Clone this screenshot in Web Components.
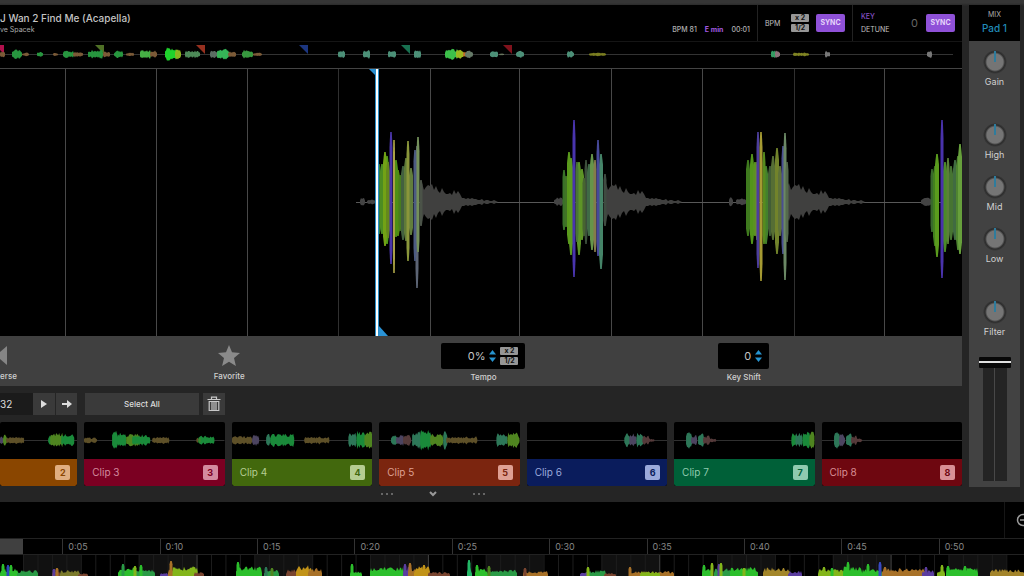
<!DOCTYPE html>
<html lang="en">
<head>
<meta charset="utf-8">
<title>Sampler deck</title>
<style>
  html, body { margin: 0; background: #252525; }
  body { font-family: Inter, "Liberation Sans", sans-serif; color: #c4c4c4; overflow-x: hidden; }
</style>
</head>
<body>
<sampler-app></sampler-app>
<script>
const define = (name, html, setup) => customElements.define(name, class extends HTMLElement {
  constructor() {
    super();
    this.attachShadow({ mode: 'open' });
  }
  connectedCallback() {
    if (this.shadowRoot.childNodes.length) return;
    const t = document.createElement('template');
    t.innerHTML = `<style>*{box-sizing:border-box}button,input{font:inherit;color:inherit;margin:0;padding:0;border:0;background:none}svg{display:block}</style>` +
      (typeof html === 'function' ? html(this) : html);
    this.shadowRoot.append(t.content.cloneNode(true));
    if (setup) setup(this, this.shadowRoot);
  }
});

/* ---------- waveform drawing ---------- */
const noise = n => { const s = Math.sin(n * 127.1) * 43758.5453; return s - Math.floor(s); };

// One spindle: x, height above and below the centre line, colour, width.
const spindle = (x, cy, up, down, color, w = 3) => {
  const h = w / 2, t = 0.8;
  return `<path fill="${color}" d="M${x - h} ${cy}L${x - h} ${cy - up * .78}L${x - t} ${cy - up}h${t * 2}L${x + h} ${cy - up * .78}L${x + h} ${cy + down * .78}L${x + t} ${cy + down}h${-t * 2}L${x - h} ${cy + down * .78}z"/>`;
};

// Runs of noise bars: [from, to, amplitude, colour]
const runs = (list, cy, both = true) => list.map(([a, b, amp, color]) => {
  const top = [], bottom = [];
  for (let x = a; x <= b; x += 1) {
    const edge = x === a || x >= b ? .5 : 1;
    const v = amp * edge * (.5 + .5 * noise(x * 1.7 + amp));
    top.push(`${x} ${(cy - v).toFixed(2)}`);
    bottom.unshift(`${x} ${(both ? cy + v * (.75 + .25 * noise(x)) : cy).toFixed(2)}`);
  }
  return `<path fill="${color}" d="M${top.join('L')}L${bottom.join('L')}z"/>`;
}).join('');

// Bursts of the main view: [x, up, down, colour, width]
const A = [
  [379,38,32,'#2f8040',4],[382,38,32,'#4c8c22',4],[387,46,42,'#4f9a17',4],[385,50,44,'#72a216',4],[388,40,36,'#64881c',4],
  [398,32,34,'#53890f',4],[396,42,35,'#4d8f14',4],[400,27,29,'#477c1e',3],
  [391,70,62,'#4a35a8',3],[394,62,71,'#aaa246',2],[403,36,38,'#43603f',4],[406,44,39,'#5f7a38',4],
  [411,34,33,'#627e3c',4],[408,61,59,'#8a963b',3],[417,56,86,'#5c6474',3],[415,52,59,'#4c5b82',3],[418,65,50,'#74905b',3],[421,22,24,'#4b5348',3]
];
const B = [
  [564,32,28,'#397228',3],[566,26,25,'#417326',3],[569,50,42,'#5a9a1c',4],[571,44,53,'#5c9b1f',4],[579,40,53,'#5b9526',4],
  [582,33,38,'#5e9426',4],[574,82,75,'#4934ae',3],[577,40,40,'#4a7636',3],[586,42,42,'#3c4f3b',3],[584,24,34,'#476530',3],
  [589,38,34,'#3f6a46',4],[592,48,48,'#65954a',4],[595,42,50,'#847c4a',3],[601,48,67,'#458468',4],[598,62,54,'#46499a',3],[605,28,24,'#3f4b41',3]
];
const C = [
  [748,42,34,'#3f7a1e',4],[752,48,42,'#53951a',4],[755,40,34,'#5b9320',4],[766,36,42,'#42802c',4],[764,50,42,'#568b1e',3],
  [757,40,38,'#718a36',3],[758,70,66,'#4c3e9c',3],[761,70,79,'#a59a32',3],[770,36,34,'#415d36',4],[773,46,38,'#566e34',4],[777,54,52,'#72832b',4],
  [780,36,34,'#5e7238',4],[783,56,52,'#4a4f91',3],[785,69,78,'#6b8865',3],[787,40,40,'#556a4e',3]
];
const D = [
  [932,33,30,'#39692c',3],[935,36,44,'#42801e',4],[937,48,55,'#5a9b1d',4],[945,40,50,'#4b8a28',4],[948,44,42,'#5b8138',3],
  [951,36,38,'#467432',4],[942,82,76,'#4932ab',3],[955,42,38,'#406b41',4],[958,46,48,'#4f8530',4],[960,58,52,'#67a03c',4]
];
const tail = [15,19,12,15,17,16,18,12,16,11,9,14,10,8,8,9,7,12,8,11,8,4,4,3,4,3,4,3,3,2,2,3,1,2,2,1,1,2,1,0];
const tailPath = (x0, cy) => {
  const up = tail.map((v, i) => `${x0 + i * 2} ${cy - v}`);
  const dn = tail.map((v, i) => `${x0 + i * 2} ${cy + v}`).reverse();
  return `<path fill="#40403f" d="M${up.join('L')}L${dn.join('L')}z"/>`;
};

define('wave-view', `
<style>
  :host{display:block;background:#000;border-top:1px solid #444}
  svg{width:100%;height:267px}
</style><svg viewBox="0 0 962 267" preserveAspectRatio="none" role="img" aria-label="Waveform"></svg>`,
(el, root) => {
  const cy = 133, svg = root.querySelector('svg');
  let s = '';
  [65,156,247,338,430,519,611,702,794,884].forEach((x, i) => {
    s += `<rect x="${x}" y="0" width="1" height="267" fill="${[3, 8].includes(i) ? '#303030' : '#484848'}"/>`;
  });
  s += `<rect x="356" y="${cy}" width="606" height="1" fill="#585858"/>`;
  s += runs([[360,365,5,'#444'],[367,376,3,'#444'],[554,563,5,'#444'],[729,733,6,'#444'],[736,746,4,'#444'],[921,931,5,'#444']], cy);
  [420,604,787].forEach(x => s += tailPath(x, cy));
  [A,B,C,D].forEach(g => g.forEach(([x,u,d,c,w]) => s += spindle(x, cy, u, d, c, w)));
  s += `<path fill="#2a8fd0" d="M369 0h8v8z"/><path fill="#2a93d6" d="M379 257l9 10h-9z"/>
    <rect x="375" width="4" height="267" fill="#2b8cc4"/><rect x="376" width="2" height="267" fill="#fff"/>`;
  svg.innerHTML = s;
});

define('wave-overview', `
<style>
  :host{display:block;background:#000;border-top:1px solid #151515}
  svg{width:100%;height:26px}
</style><svg viewBox="0 0 962 26" preserveAspectRatio="none" role="img" aria-label="Track overview"></svg>`,
(el, root) => {
  const g = '#27963f', b = '#7b5a37', t = '#4c9078';
  let s = '<rect x="0" y="12" width="953" height="1" fill="#333"/>';
  [[0,'#b0104c'],[95,'#4f7026'],[196,'#96301f'],[299,'#1c3680'],[401,'#187050'],[503,'#80121c']].forEach(([x, c]) =>
    s += x ? `<path fill="${c}" d="M${x} 3h9v9z"/>` : `<path fill="${c}" d="M0 3h4v9l-4-4z"/>`);
  s += runs([[0,5,3,b],[12,22,5,g],[22,29,2,b],[37,43,3,g],[53,58,2,b],[63,74,4,g],[73,83,3,b],[88,103,5,g],[103,110,3,b],[114,123,4,g],[126,134,2,b],
    [140,151,5,'#46b045'],[150,157,4,b],[165,177,7,'#1fd32c'],[175,181,5,'#8bb51f'],[185,200,4,'#4d8a58'],[210,219,4,'#5b6d62'],[217,229,6,'#35b557'],[228,236,3,b],
    [242,253,5,'#37993f'],[253,262,2,b],[338,345,4,t],[363,370,5,t],[388,396,4,t],[414,421,5,t],[445,458,6,'#3cc04a'],[456,464,5,'#9bb71f'],[463,467,3,'#c07028'],[465,473,4,'#667a68'],
    [490,498,4,t],[499,504,1,'#68765f'],[516,524,4,t],[567,574,4,t],[589,606,2,'#7a7d20'],[771,776,5,'#359a62'],[775,780,4,'#8d7079'],[793,809,2,'#808423'],[825,830,4,'#777'],[927,932,4,'#777']], 12.5);
  root.querySelector('svg').innerHTML = s;
});

/* ---------- small controls ---------- */
define('half-double', `
<style>
  :host{display:grid;gap:2px;width:18px}
  button{height:8px;background:#969696;color:#111;font-size:7px;line-height:8px;font-weight:700;border-radius:1px;display:block}
</style><button>x 2</button><button>1/2</button>`);

define('sync-button', `
<style>
  :host{display:block}
  button{display:block;width:29px;height:18px;border-radius:2px;background:#8f51d8;color:#e6d6fa;font-size:7px;font-weight:700;line-height:18px}
</style><button>SYNC</button>`);

define('step-arrows', `
<style>:host{display:block}button{display:block;width:7px;height:7px}svg{width:7px;height:7px}</style>
<button aria-label="Increase"><svg viewBox="0 0 7 7"><path d="M0 5.500L3.500 1L7 5.500z" fill="#2794d0"/></svg></button>
<button aria-label="Decrease"><svg viewBox="0 0 7 7"><path d="M0 1.500L3.500 6L7 1.500z" fill="#2794d0"/></svg></button>`);

define('deck-header', `
<style>
  :host{display:flex;height:36px;background:#000;align-items:stretch}
  .title{flex:1;min-width:0;padding-top:6px;white-space:nowrap}
  h1{margin:0;font-size:10px;line-height:14px;font-weight:500;color:#c4c4c4}
  p{margin:0;font-size:7px;line-height:10px;color:#aaa}
  .info{display:flex;gap:8px;font-size:7px;font-weight:500;line-height:10px;align-items:flex-end;padding:0 7px 6px 0;color:#b0b0b0;white-space:nowrap}
  .info b{color:#a35ce0}
  .box{display:flex;align-items:center;border-left:1px solid #222;padding:0 7px;font-size:7px;line-height:13px}
  .bpm{width:95px}
  .bpm span{flex:1}
  half-double{margin-right:7px}
  .key{width:110px;padding-left:8px}
  .key div{flex:1}
  .key .k{color:#8650c4;font-weight:500}
  .key div span{display:block}
  output{font-size:11px;color:#666;margin-right:8px}
</style>
<div class="title"><h1>J Wan 2 Find Me (Acapella)</h1><p>ve Spacek</p></div>
<div class="info"><span>BPM 81</span><b>E min</b><span>00:01</span></div>
<div class="box bpm"><span>BPM</span><half-double></half-double><sync-button></sync-button></div>
<div class="box key"><div><span class="k">KEY</span><span>DETUNE</span></div><output>0</output><sync-button></sync-button></div>`);

define('value-box', el => `
<style>
  :host{display:flex;flex-direction:column;align-items:center;flex:none}
  .b{display:flex;align-items:center;gap:4px;height:26px;padding:0 7px;background:#000;border-radius:2px}
  .b:has(slot:not(:empty)){gap:6px}
  input{width:${el.getAttribute('field')}px;text-align:right;font-size:11px;line-height:16px;color:#c4c4c4}
  label{font-size:8px;font-weight:500;line-height:12px;padding-top:2px;color:#d0d0d0;white-space:nowrap}
</style>
<div class="b"><input id="v" value="${el.getAttribute('value')}"><step-arrows></step-arrows><slot></slot></div>
<label for="v">${el.getAttribute('label')}</label>`);

define('icon-action', `
<style>
  :host{display:block;min-width:0}
  button{display:flex;flex-direction:column;align-items:center;font-size:8px;font-weight:500;line-height:12px;color:#d0d0d0}
  slot[name=icon]{display:block}
</style><button><slot name="icon"></slot><slot></slot></button>`);

define('clip-controls', `
<style>
  :host{display:grid;grid-template-columns:minmax(0,17fr) minmax(0,424fr) minmax(0,84fr) minmax(0,436fr);justify-items:center;align-items:start;height:50px;padding-top:7px;background:#404040}
  icon-action:first-child{justify-self:start}
  svg{height:27px}
</style>
<icon-action><svg slot="icon" width="17" viewBox="0 0 17 27"><path d="M-4 12.500L7 3v19z" fill="#858585"/></svg>erse</icon-action>
<icon-action><svg slot="icon" width="24" viewBox="0 0 24 27"><path fill="#8a8a8a" d="M12 2l3 7.300 8 .600-6 5.200 1.900 7.900-6.900-4.200L5.100 23 7 15.100 1 9.900l8-.6z"/></svg>Favorite</icon-action>
<value-box label="Tempo" value="0%" field="37"><half-double></half-double></value-box>
<value-box label="Key Shift" value="0" field="26"></value-box>`);

define('clip-toolbar', `
<style>
  :host{display:flex;padding:7px 0;height:36px}
  input{width:33px;height:22px;background:#1b1b1b;font-size:10px;color:#ddd}
  button{height:22px;width:22px;background:#3a3a3a;font-size:8px;font-weight:500;color:#ddd;display:grid;place-items:center}
  .arrow{margin:0 8px 0 1px;width:21px}
  .all{width:114px;margin-right:4px}
</style>
<input aria-label="Length" value="32">
<button aria-label="Play"><svg width="8" height="10" viewBox="0 0 8 10"><path fill="#ddd" d="M1 1l6 4-6 4z"/></svg></button>
<button class="arrow" aria-label="Next"><svg width="10" height="10" viewBox="0 0 10 10"><path fill="#ddd" d="M0 4h5V1l5 4-5 4V6H0z"/></svg></button>
<button class="all">Select All</button>
<button aria-label="Delete"><svg width="14" height="16" viewBox="0 0 14 16" fill="none" stroke="#c8c8c8"><path d="M.5 3.500h13M4.500 3V1.200h5V3M2.200 5.500v9h9.600v-9zM5 6v8M7 6v8M9 6v8" stroke-width="1.200"/></svg></button>`);

/* ---------- clips ---------- */
const G = '#1a8a3a', O = '#5e5028', T = '#2d7758', V = '#4c4460', M = '#553a3a', Y = '#4f8520';
const clips = {
  2: { color: '#8a4600', ink: '#e0ae80', wave: [[63,66,5,V],[66,70,6,Y],[69,87,4,O],[111,114,6,G],[113,126,8,Y],[124,137,7,G]] },
  3: { color: '#7b0022', ink: '#d38b9f', wave: [[0,13,3,O],[28,34,11,G],[33,42,8,G],[42,58,7,Y],[48,66,6,G],[68,85,4,O],[112,115,3,O],[114,130,5,G],[115,116,7,Y]] },
  4: { color: '#42680d', ink: '#b5cd92', wave: [[0,14,5,O],[12,20,4,O],[20,27,6,V],[34,38,7,T],[38,62,7,G],[72,97,4,O],[116,124,9,T],[124,133,10,G],[132,140,11,Y]] },
  5: { color: '#7b250f', ink: '#dfa093', wave: [[12,18,7,T],[17,25,6,V],[24,32,6,M],[33,42,10,T],[41,52,11,G],[51,64,7,Y],[64,68,10,T],[67,98,4,O],[117,128,7,T],[128,140,8,Y]] },
  6: { color: '#0a1c5c', ink: '#9aa9db', wave: [[97,103,8,T],[102,109,7,V],[109,116,8,T],[115,122,5,M],[121,127,2,M]] },
  7: { color: '#006038', ink: '#8fcbaf', wave: [[12,18,9,T],[17,23,6,V],[24,30,7,T],[29,36,5,M],[35,42,2,M],[117,122,7,G],[121,128,8,T],[128,136,9,G],[135,140,11,Y]] },
  8: { color: '#6e0710', ink: '#d98f95', wave: [[12,18,9,T],[17,23,7,V],[24,30,7,T],[29,35,5,M],[34,40,2,M]] }
};

define('clip-tile', el => {
  const n = el.getAttribute('n'), c = clips[n];
  const part = el.hasAttribute('partial');
  return `
<style>
  :host{display:block;min-width:0}
  button{display:block;width:100%;text-align:left;border-radius:2px;overflow:hidden;background:#000}
  svg{width:100%;height:37px}
  .bar{display:flex;align-items:center;height:27px;padding:0 7px 0 8px;background:${c.color};color:${c.ink};font-size:10px;line-height:14px;border-radius:0 0 2px 2px}
  .name{flex:1;padding-bottom:2px}
  .pad{width:15px;height:15px;border-radius:2px;background:${c.ink};color:${c.color};font-size:9px;line-height:15px;font-weight:700;text-align:center}
</style>
<button><svg viewBox="${part ? '63 0 77' : '0 0 140'} 37" preserveAspectRatio="none"><rect width="140" y="18" height="1" fill="#303030"/>${runs(c.wave, 18.5)}</svg>
<span class="bar"><span class="name">${part ? '' : 'Clip ' + n}</span><span class="pad">${n}</span></span></button>`;
});

define('clip-strip', `
<style>
  :host{display:block}
  .row{display:grid;grid-template-columns:minmax(0,11fr) repeat(6,minmax(0,20fr));gap:7px}
  .more{display:flex;justify-content:center;align-items:center;gap:36px;height:16px;color:#777;padding-right:96px}
</style>
<div class="row"><clip-tile n="2" partial></clip-tile><clip-tile n="3"></clip-tile><clip-tile n="4"></clip-tile><clip-tile n="5"></clip-tile><clip-tile n="6"></clip-tile><clip-tile n="7"></clip-tile><clip-tile n="8"></clip-tile></div>
<div class="more">
  <svg width="12" height="2" viewBox="0 0 12 2" fill="#666"><path d="M0 0h2v2H0zM5 0h2v2H5zM10 0h2v2h-2z"/></svg>
  <svg width="8" height="6" viewBox="0 0 8 6" fill="none" stroke="#999" stroke-width="2"><path d="M1 1l3 3 3-3"/></svg>
  <svg width="12" height="2" viewBox="0 0 12 2" fill="#666"><path d="M0 0h2v2H0zM5 0h2v2H5zM10 0h2v2h-2z"/></svg>
</div>`);

/* ---------- mixer ---------- */
define('knob-control', el => `
<style>
  :host{display:flex;flex-direction:column;align-items:center;gap:2px}
  input{appearance:none;-webkit-appearance:none;display:block;width:24px;height:24px;border-radius:50%;
    background:linear-gradient(#2e7c9d,#2e7c9d) 50% 1px/2px 11px no-repeat,radial-gradient(circle,#757575 0 8px,#2c2c2c 10px,#353535 11px,transparent 12px)}
  input::-webkit-slider-thumb{-webkit-appearance:none;width:1px;height:1px;background:transparent}
  label{font-size:9px;line-height:12px;color:#d0d0d0}
</style>
<input id="k" type="range"><label for="k">${el.getAttribute('label')}</label>`);

define('mixer-strip', `
<style>
  :host{display:flex;flex-direction:column;align-items:center;background:#424242}
  header{align-self:stretch;height:36px;background:#000;text-align:center;padding-top:4px}
  header div{font-size:7px;line-height:12px;color:#aaa}
  header strong{display:block;font-size:10px;line-height:14px;font-weight:500;color:#218bb9}
  .knobs{display:grid;gap:35px;padding:9px 0 19px}
  .eq{display:grid;gap:14px}
  .fader{appearance:none;-webkit-appearance:none;writing-mode:vertical-lr;direction:rtl;display:block;width:32px;height:124px;
    background:linear-gradient(#484848,#484848) 50% 0/1px 100% no-repeat,linear-gradient(#242424,#242424) 50% 0/24px 100% no-repeat}
  .fader::-webkit-slider-thumb{-webkit-appearance:none;width:32px;height:11px;border-radius:1px;background:linear-gradient(#080808 0 4px,#e0e0e0 4px 6px,#080808 6px)}
</style>
<header><div>MIX</div><strong>Pad 1</strong></header>
<div class="knobs"><knob-control label="Gain"></knob-control>
<div class="eq"><knob-control label="High"></knob-control><knob-control label="Mid"></knob-control><knob-control label="Low"></knob-control></div>
<knob-control label="Filter"></knob-control></div>
<input class="fader" type="range" min="0" max="100" value="100" aria-label="Volume">`);

/* ---------- timeline ---------- */
define('time-line', `
<style>
  :host{display:block;background:#000}
  .tools{display:flex;justify-content:flex-end;height:36px}
  .tools button{width:20px;border-left:1px solid #161616;padding-left:11px;overflow:hidden;display:flex;align-items:center}
  .tools svg{flex:none}
  .ruler{display:grid;grid-template-columns:minmax(0,62fr) repeat(9,minmax(0,97fr)) minmax(0,85fr);height:17px;border:solid #222;border-width:1px 0;font-size:9px;line-height:15px;color:#878787}
  .ruler span{border-left:1px solid #333;padding-left:5px}
  .ruler i{display:block;width:23px;height:15px;background:#404040}
  .wave{width:100%;height:21px}
</style>
<div class="tools"><button aria-label="Zoom out"><svg width="18" height="14" viewBox="0 0 18 14" fill="none" stroke="#999" stroke-width="1.500"><circle cx="7" cy="7" r="5.500"/><path d="M4 7h6M11 11l4 3"/></svg></button></div>
<div class="ruler"><i></i></div>
<svg class="wave" viewBox="0 0 1024 21" preserveAspectRatio="none" role="img" aria-label="Arrangement"></svg>`,
(el, root) => {
  const ruler = root.querySelector('.ruler');
  for (let s = 5; s <= 50; s += 5) {
    const t = document.createElement('span');
    t.textContent = `0:${String(s).padStart(2, '0')}`;
    ruler.append(t);
  }
  let s = '';
  for (let i = 0; i < 9; i++) s += `<rect x="${23 + i * 115.7}" width="58" height="21" fill="#111"/>`;
  for (let i = 0; i < 69; i++) s += `<rect x="${23 + i * 14.46}" width="1" height="21" fill="${i % 16 === 12 ? '#444' : '#1d1d1d'}"/>`;
  const g = '#2cbf2c', e = '#2a9b46', y = '#83b51a', o = '#a87128', r = '#7a4530', p = '#5b3da0', a = '#c29318';
  s += runs([[0,18,8,g],[17,38,6,e],[52,60,5,r],[60,80,6,'#7b7a2b'],[78,88,3,r],[118,135,9,g],[134,155,7,e],[160,168,3,p],[168,174,7,o],[172,198,10,y],[194,204,4,r],
    [236,262,10,g],[264,279,6,e],[286,300,7,r],[296,312,11,a],[308,322,8,o],[350,362,5,g],[370,404,9,g],[403,410,10,p],[408,416,9,o],[414,430,10,a],[428,450,4,r],
    [467,472,9,'#23b766'],[475,488,8,g],[488,517,7,e],[523,548,5,o],[580,590,4,p],[588,606,6,e],[604,616,3,r],[630,674,5,o],[640,660,5,y],
    [702,712,8,g],[714,732,8,e],[730,758,9,g],[763,790,9,'#a3862a'],[788,802,5,p],[818,845,7,y],[843,862,10,g],[862,882,7,g],[882,926,8,o],[922,934,6,p],
    [937,945,6,y],[946,978,9,g],[990,1024,7,'#a3842a']], 21, false);
  [[3,12,g],[8,11,'#2945b8'],[11,11,g],[54,7,p],[57,8,o],[123,12,e],[135,10,y],[141,11,g],[171,15,o],[238,14,g],[266,9,T],[272,8,Y],[352,12,g],[405,12,p],[410,13,o],[424,11,a],
    [469,16,'#23b766'],[477,11,g],[489,10,Y],[525,8,r],[588,9,y],[630,9,o],[704,11,g],[712,13,y],[719,12,p],[721,13,y],[744,8,y],[824,9,y],[832,8,g],[848,14,g],[868,12,g],[880,14,'#3849c0'],[885,9,o],[926,9,p],[942,11,y],[948,10,g],[965,10,g]]
    .forEach(([x, h, c]) => s += spindle(x, 21, h, 0, c, 3));
  root.querySelector('.wave').innerHTML = s;
});

define('sampler-app', `
<style>
  :host{display:block}
  main{display:grid;grid-template-columns:minmax(0,1fr) 51px;gap:7px;padding:5px 4px 0 0;background:linear-gradient(#353535 0 3px,#252525 6px) no-repeat}
  mixer-strip{margin-bottom:15px}
</style>
<main>
  <section><deck-header></deck-header><wave-overview></wave-overview><wave-view></wave-view><clip-controls></clip-controls><clip-toolbar></clip-toolbar><clip-strip></clip-strip></section>
  <mixer-strip></mixer-strip>
</main>
<time-line></time-line>`);
</script>
</body>
</html>
